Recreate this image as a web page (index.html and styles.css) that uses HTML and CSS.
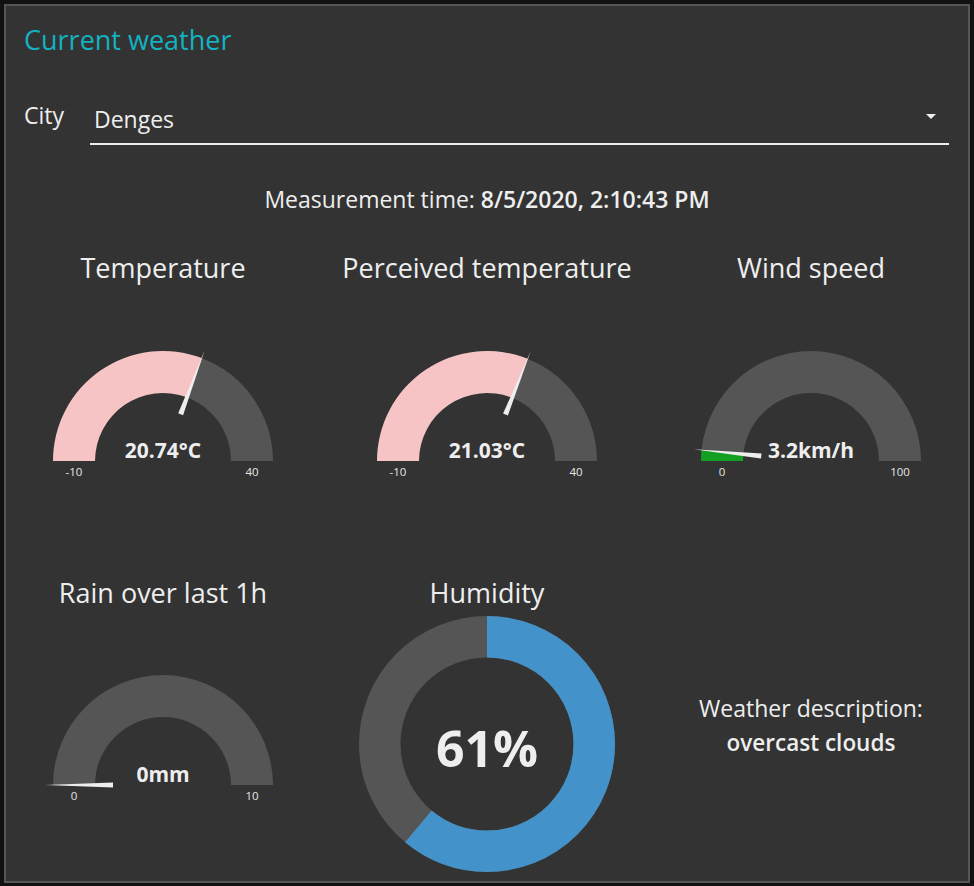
FILE: index.html
```html
<!DOCTYPE html>
<html lang="en">
<head>
<meta charset="utf-8">
<title>Current weather</title>
<link rel="stylesheet" href="styles.css">
</head>
<body>
<div class="card">
  <h1 class="card-title">Current weather</h1>

  <div class="city-row">
    <span class="city-label">City</span>
    <div class="select">
      <span class="select-value">Denges</span>
      <svg class="select-arrow" width="10" height="5" viewBox="0 0 10 5"><path d="M0 0 L10 0 L5 5 Z" fill="#eeeeee"/></svg>
    </div>
  </div>

  <p class="measure">Measurement time: <b>8/5/2020, 2:10:43 PM</b></p>

  <div class="grid">
    <div class="cell">
      <h2 class="cell-title">Temperature</h2>
      <svg class="gauge" width="300" height="200" viewBox="0 0 300 200">
        <path class="g-bg" d="M40 170 A110 110 0 0 1 260 170 L218 170 A68 68 0 0 0 82 170 Z"/>
        <path class="g-pink" d="M40 170 A110 110 0 0 1 188.81 67.07 L173.99 106.37 A68 68 0 0 0 82 170 Z"/>
        <path class="g-needle" d="M-118 0 L-50 -2.6 L-50 2.6 Z" transform="translate(150 170) rotate(110.66)"/>
        <text class="g-value" x="150" y="167">20.74°C</text>
        <text class="g-lim" x="61" y="185">-10</text>
        <text class="g-lim" x="239" y="185">40</text>
      </svg>
    </div>
    <div class="cell">
      <h2 class="cell-title">Perceived temperature</h2>
      <svg class="gauge" width="300" height="200" viewBox="0 0 300 200">
        <path class="g-bg" d="M40 170 A110 110 0 0 1 260 170 L218 170 A68 68 0 0 0 82 170 Z"/>
        <path class="g-pink" d="M40 170 A110 110 0 0 1 190.69 67.80 L175.15 106.82 A68 68 0 0 0 82 170 Z"/>
        <path class="g-needle" d="M-118 0 L-50 -2.6 L-50 2.6 Z" transform="translate(150 170) rotate(111.71)"/>
        <text class="g-value" x="150" y="167">21.03°C</text>
        <text class="g-lim" x="61" y="185">-10</text>
        <text class="g-lim" x="239" y="185">40</text>
      </svg>
    </div>
    <div class="cell">
      <h2 class="cell-title">Wind speed</h2>
      <svg class="gauge" width="300" height="200" viewBox="0 0 300 200">
        <path class="g-bg" d="M40 170 A110 110 0 0 1 260 170 L218 170 A68 68 0 0 0 82 170 Z"/>
        <path class="g-green" d="M40 170 A110 110 0 0 1 40.56 158.96 L82.34 163.18 A68 68 0 0 0 82 170 Z"/>
        <path class="g-needle" d="M-118 0 L-50 -2.6 L-50 2.6 Z" transform="translate(150 170) rotate(5.76)"/>
        <text class="g-value" x="150" y="167">3.2km/h</text>
        <text class="g-lim" x="61" y="185">0</text>
        <text class="g-lim" x="239" y="185">100</text>
      </svg>
    </div>

    <div class="cell">
      <h2 class="cell-title">Rain over last 1h</h2>
      <svg class="gauge" width="300" height="200" viewBox="0 0 300 200">
        <path class="g-bg" d="M40 169 A110 110 0 0 1 260 169 L218 169 A68 68 0 0 0 82 169 Z"/>
        <path class="g-needle" d="M-118 0 L-50 -2.6 L-50 2.6 Z" transform="translate(150 169) rotate(0)"/>
        <text class="g-value" x="150" y="166">0mm</text>
        <text class="g-lim" x="61" y="184">0</text>
        <text class="g-lim" x="239" y="184">10</text>
      </svg>
    </div>
    <div class="cell">
      <h2 class="cell-title">Humidity</h2>
      <svg class="donut" width="300" height="256" viewBox="0 0 300 256">
        <circle class="d-bg" cx="150" cy="128" r="107.25"/>
        <circle class="d-fill" cx="150" cy="128" r="107.25" stroke-dasharray="411.06 673.87" transform="rotate(-90 150 128)"/>
        <text class="d-value" x="150" y="151">61%</text>
      </svg>
    </div>
    <div class="cell cell-desc">
      <p class="desc">Weather description:<br><b>overcast clouds</b></p>
    </div>
  </div>
</div>
</body>
</html>
```

FILE: styles.css
```css
* { box-sizing: border-box; }

html, body {
  margin: 0;
  padding: 0;
  background: #111111;
}

body {
  font-family: "Open Sans", "Noto Sans", sans-serif;
  color: #eeeeee;
  width: 974px;
  height: 886px;
  overflow: hidden;
}

.card {
  margin: 4px 0 0 4px;
  width: 966px;
  height: 879px;
  background: #333333;
  border: 2px solid #555555;
}

.card-title {
  margin: 0;
  padding: 19px 0 0 18px;
  font-size: 27px;
  line-height: 30px;
  font-weight: 400;
  color: #12b2c0;
}

.city-row {
  display: flex;
  align-items: flex-start;
  margin: 45px 19px 0 18px;
  height: 45px;
}

.city-label {
  width: 66px;
  font-size: 23px;
  line-height: 30px;
}

.select {
  flex: 1;
  height: 45px;
  border-bottom: 2px solid #eeeeee;
  display: flex;
  align-items: flex-start;
  justify-content: space-between;
  padding: 4px 13px 0 4px;
}

.select-value {
  font-size: 23px;
  line-height: 30px;
}

.select-arrow {
  margin-top: 10px;
}

.measure {
  margin: 40px 0 0;
  text-align: center;
  font-size: 23px;
  line-height: 28px;
}

.measure b { font-weight: 600; }

.grid {
  margin: 32px auto 0;
  width: 948px;
  display: grid;
  grid-template-columns: 300px 300px 300px;
  column-gap: 24px;
  row-gap: 79px;
}

.cell {
  display: flex;
  flex-direction: column;
  align-items: center;
}

.cell-title {
  margin: 0;
  height: 46px;
  font-size: 27px;
  line-height: 46px;
  font-weight: 400;
  text-align: center;
  white-space: nowrap;
}

.gauge, .donut { display: block; }

.g-bg { fill: #555555; }
.g-pink { fill: #f6c4c4; }
.g-green { fill: #13a022; }
.g-needle { fill: #eeeeee; }

.g-value {
  fill: #eeeeee;
  font-family: "Open Sans", "Noto Sans", sans-serif;
  font-size: 21px;
  font-weight: 700;
  text-anchor: middle;
}

.g-lim {
  fill: #e6e6e6;
  font-family: "Open Sans", "Noto Sans", sans-serif;
  font-size: 11.5px;
  text-anchor: middle;
}

.d-bg {
  fill: none;
  stroke: #555555;
  stroke-width: 41.5;
}

.d-fill {
  fill: none;
  stroke: #4392c9;
  stroke-width: 41.5;
}

.d-value {
  fill: #eeeeee;
  font-family: "Open Sans", "Noto Sans", sans-serif;
  font-size: 50px;
  font-weight: 700;
  text-anchor: middle;
}

.cell-desc {
  padding-top: 121px;
}

.desc {
  margin: 0;
  font-size: 23px;
  line-height: 34px;
  text-align: center;
}

.desc b { font-weight: 600; font-size: 22.5px; }
```
